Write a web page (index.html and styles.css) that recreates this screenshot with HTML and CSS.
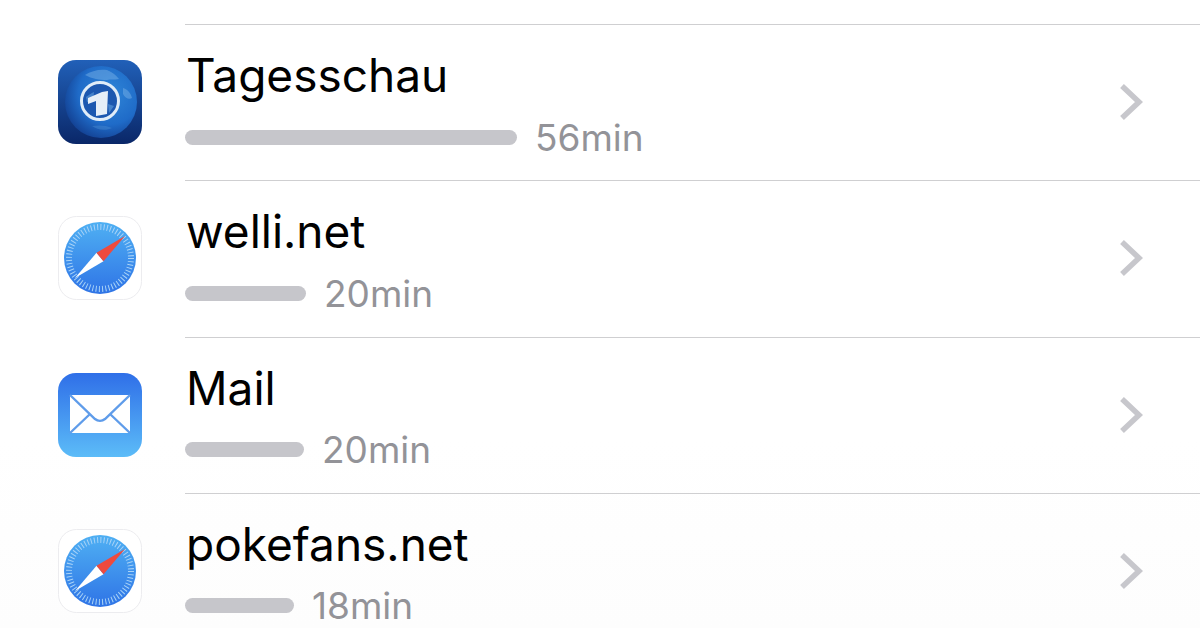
FILE: index.html
```html
<!DOCTYPE html>
<html lang="en">
<head>
  <meta charset="UTF-8" />
  <title>Screen Time</title>
  <link rel="stylesheet" href="styles.css">
</head>
<body>
<svg class="defs" width="0" height="0">
  <defs>
    <linearGradient id="safariBlue" x1="0" y1="0" x2="0" y2="1">
      <stop offset="0" stop-color="#4fb0f3"/>
      <stop offset="1" stop-color="#2f74e6"/>
    </linearGradient>
    <linearGradient id="mailBlue" x1="0" y1="0" x2="0" y2="1">
      <stop offset="0" stop-color="#2f6fe8"/>
      <stop offset="1" stop-color="#5cbcf8"/>
    </linearGradient>
    <linearGradient id="newsBg" x1="0" y1="0" x2="0" y2="1">
      <stop offset="0" stop-color="#2160b8"/>
      <stop offset="1" stop-color="#0a2768"/>
    </linearGradient>
    <radialGradient id="newsGlobe" cx="0.62" cy="0.38" r="0.72">
      <stop offset="0" stop-color="#2f86d8"/>
      <stop offset="0.6" stop-color="#1f6bc8"/>
      <stop offset="1" stop-color="#113a8a"/>
    </radialGradient>
    <symbol id="safari" viewBox="0 0 84 84">
      <rect x="0.5" y="0.5" width="83" height="83" rx="18" fill="#fff" stroke="#ececef"/>
      <circle cx="42" cy="42" r="36" fill="url(#safariBlue)"/>
      <circle cx="42" cy="42" r="31" fill="none" stroke="#a9d3f7" stroke-width="6" stroke-dasharray="1 2.25"/>
      <polygon points="38.5,36.8 45.5,45.2 17,62" fill="#fff"/>
      <polygon points="38.5,36.8 45.5,45.2 67,20" fill="#ee4a3e"/>
    </symbol>
  </defs>
</svg>
<div class="list">
  <div class="row">
    <svg class="icon" viewBox="0 0 84 84">
      <rect width="84" height="84" rx="18" fill="url(#newsBg)"/>
      <circle cx="43" cy="42" r="36" fill="url(#newsGlobe)"/>
      <path d="M27 15c6-4 14-6 22-5 5 2 9 5 12 9-5 1-8 0-12 1-7 0-15-1-22-5zM65 28c4 1 8 5 9 10-3 2-7 0-9-4z" fill="#7fb6e8" opacity="0.45"/>
      <path d="M34 66c6-1 14-1 20 2-6 3-15 2-20-2z" fill="#4f90d4" opacity="0.4"/>
      <circle cx="42" cy="41" r="18.5" fill="#1c58b0" stroke="#dfecf8" stroke-width="3"/>
      <path d="M28 37c3-2 5-4 8-5l-1 9-6 1zM50 44l6 2-5 7z" fill="#5f9fdc" opacity="0.6"/>
      <polygon points="30,38 44,32 50,31 49,54 38,56 38,41 30,44" fill="#e6eff8"/>
    </svg>
    <div class="row-body">
      <div class="row-text">
        <div class="app-name">Tagesschau</div>
        <div class="usage">
          <span class="bar" style="width:332px"></span>
          <span class="time">56min</span>
        </div>
      </div>
      <svg class="chevron" viewBox="0 0 24 38"><path d="M3 3l17 16L3 35"/></svg>
    </div>
  </div>
  <div class="row">
    <svg class="icon"><use href="#safari"/></svg>
    <div class="row-body">
      <div class="row-text">
        <div class="app-name">welli.net</div>
        <div class="usage">
          <span class="bar" style="width:121px"></span>
          <span class="time">20min</span>
        </div>
      </div>
      <svg class="chevron" viewBox="0 0 24 38"><path d="M3 3l17 16L3 35"/></svg>
    </div>
  </div>
  <div class="row">
    <svg class="icon" viewBox="0 0 84 84">
      <rect width="84" height="84" rx="18" fill="url(#mailBlue)"/>
      <rect x="12" y="22" width="60" height="38" rx="1.5" fill="#fff"/>
      <path d="M12 22l25 24c3 2.5 7 2.5 10 0l25-24M12 60l20-19M72 60L52 41" fill="none" stroke="#5f9cea" stroke-width="2.4"/>
    </svg>
    <div class="row-body">
      <div class="row-text">
        <div class="app-name">Mail</div>
        <div class="usage">
          <span class="bar" style="width:119px"></span>
          <span class="time">20min</span>
        </div>
      </div>
      <svg class="chevron" viewBox="0 0 24 38"><path d="M3 3l17 16L3 35"/></svg>
    </div>
  </div>
  <div class="row">
    <svg class="icon"><use href="#safari"/></svg>
    <div class="row-body">
      <div class="row-text">
        <div class="app-name">pokefans.net</div>
        <div class="usage">
          <span class="bar" style="width:109px"></span>
          <span class="time">18min</span>
        </div>
      </div>
      <svg class="chevron" viewBox="0 0 24 38"><path d="M3 3l17 16L3 35"/></svg>
    </div>
  </div>
</div>
</body>
</html>
```

FILE: styles.css
```css
html, body {
  margin: 0;
  height: 628px;
  overflow: hidden;
}
body {
  background: linear-gradient(#fff, #fff 70%, #fdfdfd);
  font-family: Inter, "Liberation Sans", Arial, sans-serif;
  color: #000;
}
.defs {
  position: absolute;
}
.list {
  padding-top: 24px;
}
.row {
  display: flex;
  height: 156.33px;
  padding-left: 58px;
}
.icon {
  flex: none;
  width: 84px;
  height: 84px;
  margin: 36px 43px 0 0;
}
.row-body {
  flex: 1;
  display: flex;
  justify-content: space-between;
  border-top: 1px solid #cfcfd1;
}
.row-text {
  padding-top: 21px;
}
.app-name {
  font-size: 46px;
  line-height: 58px;
  margin-left: 1px;
}
.usage {
  display: flex;
  align-items: center;
  gap: 18px;
  height: 46px;
  margin-top: 10px;
}
.bar {
  height: 15px;
  border-radius: 8px;
  background: #c6c6cb;
}
.time {
  font-size: 37px;
  color: #939398;
}
.chevron {
  width: 24px;
  height: 38px;
  margin: 58px 57px 0 0;
  fill: none;
  stroke: #c7c7cc;
  stroke-width: 5.5;
}
```
